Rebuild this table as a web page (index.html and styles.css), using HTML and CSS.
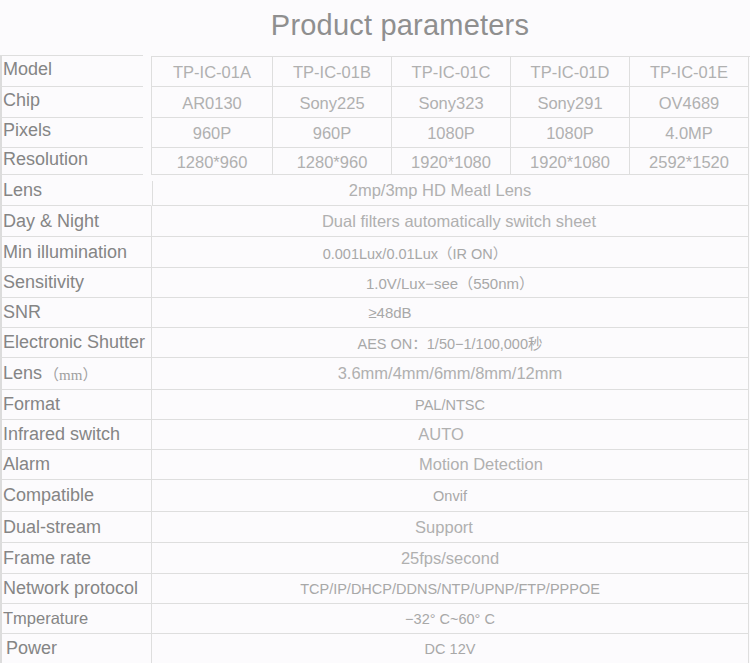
FILE: index.html
```html
<!DOCTYPE html>
<html lang="en">
<head>
<meta charset="utf-8">
<title>Product parameters</title>
<link rel="stylesheet" href="styles.css">
</head>
<body>
<div class="page">
  <h1 class="title">Product parameters</h1>

  <div class="top">
    <div class="top-labels">
      <div class="tl r1">Model</div>
      <div class="tl r2">Chip</div>
      <div class="tl r3">Pixels</div>
      <div class="tl r4">Resolution</div>
    </div>
    <div class="models">
      <div class="m r1">TP-IC-01A</div>
      <div class="m r1">TP-IC-01B</div>
      <div class="m r1">TP-IC-01C</div>
      <div class="m r1">TP-IC-01D</div>
      <div class="m r1 last">TP-IC-01E</div>

      <div class="m r2">AR0130</div>
      <div class="m r2">Sony225</div>
      <div class="m r2">Sony323</div>
      <div class="m r2">Sony291</div>
      <div class="m r2 last">OV4689</div>

      <div class="m r3">960P</div>
      <div class="m r3">960P</div>
      <div class="m r3">1080P</div>
      <div class="m r3">1080P</div>
      <div class="m r3 last">4.0MP</div>

      <div class="m r4">1280*960</div>
      <div class="m r4">1280*960</div>
      <div class="m r4">1920*1080</div>
      <div class="m r4">1920*1080</div>
      <div class="m r4 last">2592*1520</div>
    </div>
  </div>

  <div class="specs">
    <div class="lab">Lens</div><div class="val v-lens first">2mp/3mp HD Meatl Lens</div>
    <div class="lab">Day &amp; Night</div><div class="val v-dn">Dual filters automatically switch sheet</div>
    <div class="lab">Min illumination</div><div class="val small v-min">0.001Lux/0.01Lux（IR ON）</div>
    <div class="lab">Sensitivity</div><div class="val mid">1.0V/Lux−see（550nm）</div>
    <div class="lab">SNR</div><div class="val mid v-snr">≥48dB</div>
    <div class="lab">Electronic Shutter</div><div class="val small">AES ON：1/50−1/100,000秒</div>
    <div class="lab">Lens<span class="mm">（mm）</span></div><div class="val">3.6mm/4mm/6mm/8mm/12mm</div>
    <div class="lab">Format</div><div class="val small">PAL/NTSC</div>
    <div class="lab">Infrared switch</div><div class="val v-ir">AUTO</div>
    <div class="lab">Alarm</div><div class="val v-alarm">Motion Detection</div>
    <div class="lab">Compatible</div><div class="val small">Onvif</div>
    <div class="lab">Dual-stream</div><div class="val v-dual">Support</div>
    <div class="lab">Frame rate</div><div class="val">25fps/second</div>
    <div class="lab">Network protocol</div><div class="val small">TCP/IP/DHCP/DDNS/NTP/UPNP/FTP/PPPOE</div>
    <div class="lab lab-sm">Tmperature</div><div class="val small">−32° C~60° C</div>
    <div class="lab lab-pw">Power</div><div class="val small">DC 12V</div>
  </div>
</div>
</body>
</html>
```

FILE: styles.css
```css
html, body {
  margin: 0;
  padding: 0;
  background: #fcfbfd;
}

.page {
  width: 750px;
  height: 663px;
  overflow: hidden;
  font-family: "Liberation Sans", Arial, "Noto Sans CJK SC", sans-serif;
  background: #fcfbfd;
}

.title {
  margin: 0;
  height: 55px;
  box-sizing: border-box;
  padding: 9px 0 0 50px;
  text-align: center;
  font-size: 29px;
  font-weight: normal;
  letter-spacing: 0.2px;
  color: #8f8f8f;
  line-height: 33px;
}

/* top block */
.top {
  display: flex;
  gap: 8px;
}

.top-labels {
  width: 143px;
  border-top: 1px solid #dedede;
  display: flex;
  flex-direction: column;
}

.tl {
  box-sizing: border-box;
  border-left: 2px solid #dcdcdc;
  border-bottom: 1px solid #dedede;
  padding: 0 0 4px 1px;
  display: flex;
  align-items: center;
  font-size: 18px;
  color: #858585;
}

.r1 { height: 31px; }
.r2 { height: 31px; }
.r3 { height: 30px; }
.r4 { height: 27px; }

.models {
  flex: 1;
  display: grid;
  grid-template-columns: 121px 119px 119px 119px 120px;
  border-top: 1px solid #dedede;
  margin-top: 1px;
}

.models .r1 { height: 30px; }

.m {
  box-sizing: border-box;
  border-left: 1px solid #dedede;
  border-bottom: 1px solid #dedede;
  display: flex;
  align-items: center;
  justify-content: center;
  padding-top: 2px;
  font-size: 16.5px;
  color: #b0b0b0;
}

.m.last {
  border-right: 1px solid #dedede;
}

/* spec rows */
.specs {
  display: grid;
  grid-template-columns: 151px 598px;
  grid-template-rows: 31px 31px 31px 30px 30px 30px 32px 30px 30px 30px 32px 31px 31px 30px 30px 30px;
}

.lab {
  box-sizing: border-box;
  border-left: 2px solid #dcdcdc;
  border-bottom: 1px solid #dedede;
  padding-left: 1px;
  display: flex;
  align-items: center;
  font-size: 18px;
  color: #858585;
  white-space: nowrap;
}

.lab .mm {
  font-family: "Liberation Serif", "Noto Sans CJK SC", serif;
  font-size: 15px;
  margin-left: 2px;
  color: #a0a0a0;
}

.lab-sm { font-size: 16.5px; }
.lab-pw { padding-left: 4px; }

.val {
  box-sizing: border-box;
  border-left: 1px solid #dedede;
  border-right: 1px solid #dedede;
  border-bottom: 1px solid #dedede;
  display: flex;
  align-items: center;
  justify-content: center;
  font-size: 16.5px;
  color: #b0b0b0;
  white-space: nowrap;
}

.val.first {
  border-left-color: transparent;
  background-image: linear-gradient(#dedede, #dedede);
  background-size: 1px 24px;
  background-position: 0 100%;
  background-repeat: no-repeat;
}

.val.small { font-size: 14.5px; color: #a8a8a8; }
.val.mid { font-size: 15px; color: #a8a8a8; }

.v-lens { padding-right: 20px; }
.v-dn { padding-left: 18px; }
.v-min { padding-right: 70px; }
.v-snr { padding-right: 120px; }
.v-ir { padding-right: 18px; }
.v-alarm { padding-left: 62px; }
.v-dual { padding-right: 12px; }
```
